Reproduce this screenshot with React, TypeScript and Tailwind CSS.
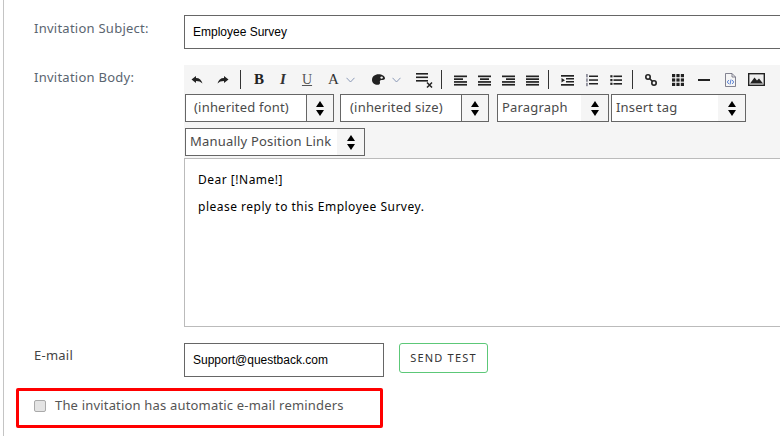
const ui = { fontFamily: '"Noto Sans", sans-serif' };
const serif = { fontFamily: '"Liberation Serif", serif' };

function Sep({ cls = '' }: { cls?: string }) {
  return <div className={`w-px h-[19px] bg-[#333] shrink-0 ${cls}`} />;
}

function Box({ w = 'w-6', children }: { w?: string; children: React.ReactNode }) {
  return <div className={`${w} h-[20px] flex items-center justify-center shrink-0`}>{children}</div>;
}

function I({ w = 16, children }: { w?: number; children: React.ReactNode }) {
  return (
    <svg width={w} height="14" viewBox={`0 0 ${w} 14`} className="shrink-0" fill="#222" stroke="none">
      {children}
    </svg>
  );
}

function Lines({ rows }: { rows: [number, number][] }) {
  return (
    <I w={13}>
      {rows.map(([x, w], i) => (
        <rect key={i} x={x} y={2.5 + i * 2.8} width={w} height="1.7" />
      ))}
    </I>
  );
}

function Chevron() {
  return (
    <svg width="9" height="6" viewBox="0 0 9 6" className="shrink-0" fill="none" stroke="#7f8fb0" strokeWidth="0.9">
      <path d="M0.5 0.8 L4.5 5 L8.5 0.8" />
    </svg>
  );
}

function Spinner({ cls }: { cls: string }) {
  return (
    <div className={`flex flex-col items-center justify-center gap-[3px] shrink-0 self-stretch bg-[#f5f5f5] ${cls}`}>
      <div className="w-0 h-0 border-x-[4.5px] border-x-transparent border-b-[6px] border-b-black" />
      <div className="w-0 h-0 border-x-[4.5px] border-x-transparent border-t-[6px] border-t-black" />
    </div>
  );
}

function Select({ label, w, text, arrow, divider }: { label: string; w: string; text: string; arrow: string; divider?: boolean }) {
  return (
    <div className={`flex items-stretch h-7 border border-[#666] bg-white shrink-0 ${w}`}>
      <div className={`flex-1 min-w-0 flex items-center text-[13px] tracking-[0.2px] text-[#4a4a4a] whitespace-nowrap ${text}`} style={ui}>
        {label}
      </div>
      <Spinner cls={`${arrow} ${divider ? 'border-l border-l-[#666]' : ''}`} />
    </div>
  );
}

export default function App() {
  return (
    <div className="w-[780px] h-[436px] overflow-hidden bg-white">
      <div className="ml-[3px] h-full border-l border-l-[#c4c4c4] pl-[30px] pt-[15px]">
        <div className="flex items-start h-[34px]">
          <div className="w-[150px] shrink-0 pt-[4px] text-[13px] leading-[18px] tracking-[0.25px] text-[#5a6570]" style={ui}>Invitation Subject:</div>
          <div className="w-[620px] shrink-0 h-[34px] border border-[#666] flex items-center pl-2 text-[12px] text-black" style={{ fontFamily: '"Liberation Sans", sans-serif' }}>Employee Survey</div>
        </div>

        <div className="flex items-start mt-[16px]">
          <div className="w-[150px] shrink-0 pt-[3px] text-[13px] leading-[18px] tracking-[0.25px] text-[#5a6570]" style={ui}>Invitation Body:</div>
          <div className="w-[620px] shrink-0">
            <div className="bg-[#f5f5f5] h-[94px] border-b border-b-[#bbb]">
              <div className="h-[29px] flex items-center">
                <Box w="w-[26px]"><I w={12}><path d="M0.5 6.5 L5 3 V5 C8.5 5 10.5 7 11.5 10.5 C9.8 8.8 7.8 8 5 8 V10 Z" /></I></Box>
                <Box w="w-[26px]"><I w={12}><path d="M11.5 6.5 L7 3 V5 C3.5 5 1.5 7 0.5 10.5 C2.2 8.8 4.2 8 7 8 V10 Z" /></I></Box>
                <Sep cls="ml-[4px]" />
                <div className="w-[6px] shrink-0" />
                <Box><span className="text-[15px] font-bold text-[#222] leading-none" style={serif}>B</span></Box>
                <Box><span className="text-[15px] font-bold italic text-[#333] leading-none" style={serif}>I</span></Box>
                <Box><span className="text-[14px] underline text-[#555] leading-none" style={serif}>U</span></Box>
                <div className="w-[44px] shrink-0 flex items-center pl-[9px] gap-[7px]">
                  <span className="text-[15px] text-[#333] leading-none" style={serif}>A</span>
                  <Chevron />
                </div>
                <div className="flex items-center gap-[7px] ml-[9px] shrink-0">
                  <svg width="13" height="11" viewBox="0 0 13 11" className="shrink-0">
                    <path d="M0 6 C0 2.5 3 0.3 6.5 0.3 C10 0.3 13 2 13 4.5 C13 6 11 6 9.5 6 C8 6 7.5 7 8 8.5 C8.3 10 7 10.8 5.5 10.8 C2.5 10.8 0 9 0 6 Z" fill="#222" />
                    <circle cx="9.6" cy="3.6" r="1.2" fill="#f5f5f5" />
                  </svg>
                  <Chevron />
                </div>
                <svg width="17" height="16" viewBox="0 0 17 16" className="shrink-0 ml-[15px]">
                  <rect x="0" y="1" width="12" height="1.6" fill="#222" />
                  <rect x="0" y="4.5" width="12" height="1.6" fill="#222" />
                  <rect x="0" y="8" width="12" height="1.6" fill="#222" />
                  <path d="M11 10.5 L16 15.5 M16 10.5 L11 15.5" stroke="#222" strokeWidth="1.5" />
                </svg>
                <Sep cls="ml-[8px]" />
                <div className="w-[6px] shrink-0" />
                <Box><Lines rows={[[0, 13], [0, 9], [0, 13], [0, 13]]} /></Box>
                <Box><Lines rows={[[0, 13], [2, 9], [0, 13], [0, 13]]} /></Box>
                <Box><Lines rows={[[0, 13], [4, 9], [0, 13], [0, 13]]} /></Box>
                <Box><Lines rows={[[0, 13], [0, 13], [0, 13], [0, 13]]} /></Box>
                <Sep cls="ml-[4px]" />
                <div className="w-[6px] shrink-0" />
                <Box w="w-[25px]">
                  <I w={13}>
                    <rect x="0" y="2" width="13" height="1.7" />
                    <rect x="5" y="5" width="8" height="1.5" />
                    <rect x="5" y="8" width="8" height="1.5" />
                    <rect x="0" y="11" width="13" height="1.7" />
                    <path d="M0.5 5 L4 7.3 L0.5 9.6 Z" />
                  </I>
                </Box>
                <Box>
                  <I w={12}>
                    <rect x="3" y="2.5" width="9" height="1.5" />
                    <rect x="3" y="6.3" width="9" height="1.5" />
                    <rect x="3" y="10" width="9" height="1.5" />
                    <rect x="0.3" y="1" width="1.3" height="3.4" fill="#667" />
                    <rect x="0.3" y="5.4" width="1.3" height="3.4" fill="#667" />
                    <rect x="0.3" y="9.8" width="1.3" height="3.4" fill="#667" />
                  </I>
                </Box>
                <Box>
                  <I w={12}>
                    <rect x="3.5" y="2.5" width="8.5" height="1.6" />
                    <rect x="3.5" y="6.3" width="8.5" height="1.6" />
                    <rect x="3.5" y="10" width="8.5" height="1.6" />
                    <rect x="0.3" y="2.2" width="2.2" height="2.2" />
                    <rect x="0.3" y="6" width="2.2" height="2.2" />
                    <rect x="0.3" y="9.7" width="2.2" height="2.2" />
                  </I>
                </Box>
                <Sep cls="ml-[4px]" />
                <div className="w-[5px] shrink-0" />
                <Box w="w-[26px]">
                  <svg width="12" height="12" viewBox="0 0 12 12" fill="none" stroke="#222" strokeWidth="1.6" className="shrink-0">
                    <circle cx="3" cy="3" r="2.2" />
                    <circle cx="9" cy="9" r="2.2" />
                    <path d="M4.5 4.5 L7.5 7.5" />
                  </svg>
                </Box>
                <Box w="w-[27px]">
                  <svg width="12" height="12" viewBox="0 0 12 12" fill="#222" className="shrink-0">
                    {[0, 4.4, 8.8].flatMap((y) => [0, 4.4, 8.8].map((x) => <rect key={`${x}-${y}`} x={x} y={y} width="3.2" height="3.2" />))}
                  </svg>
                </Box>
                <Box w="w-[26px]"><div className="w-[12px] h-[2px] bg-[#222]" /></Box>
                <Box w="w-[26px]">
                  <svg width="11" height="14" viewBox="0 0 11 14" fill="none" stroke="#667" strokeWidth="0.8" className="shrink-0">
                    <path d="M0.5 0.5 H7 L10.5 4 V13.5 H0.5 Z M7 0.5 V4 H10.5" />
                    <path d="M3.8 7 L2.3 9 L3.8 11 M7.2 7 L8.7 9 L7.2 11 M6 6.5 L5 11.5" stroke="#36c" />
                  </svg>
                </Box>
                <Box w="w-[26px]">
                  <svg width="17" height="13" viewBox="0 0 17 13" className="shrink-0">
                    <rect x="0.7" y="0.7" width="15.6" height="11.6" fill="#eee" stroke="#222" strokeWidth="1.4" />
                    <path d="M2 10.5 L6.5 4.5 L9 7.5 L11 5.5 L15 10.5 Z" fill="#222" />
                  </svg>
                </Box>
              </div>
              <div className="flex pl-px">
                <Select label="(inherited font)" w="w-[149px]" text="pl-[8px]" arrow="w-[27px]" divider />
                <Select label="(inherited size)" w="w-[149px] ml-[6px]" text="pl-[9px]" arrow="w-[27px]" divider />
                <Select label="Paragraph" w="w-[112px] ml-[8px]" text="pl-[4px]" arrow="w-[27px]" />
                <Select label="Insert tag" w="w-[135px] ml-[2px]" text="pl-[4px]" arrow="w-[27px]" />
              </div>
              <div className="mt-[6px] pl-px">
                <Select label="Manually Position Link" w="w-[180px]" text="pl-[4px]" arrow="w-[27px]" />
              </div>
            </div>
            <div className="h-[168px] border border-[#bbb] border-t-0 pl-[13px] pt-[12px] text-[12px] text-black tracking-[0.5px]" style={ui}>
              <div className="leading-[17px]">Dear [!Name!]</div>
              <div className="leading-[17px] mt-[10px]">please reply to this Employee Survey.</div>
            </div>
          </div>
        </div>

        <div className="flex items-start mt-[16px]">
          <div className="w-[150px] shrink-0 pt-[3px] text-[13px] leading-[18px] tracking-[0.25px] text-[#444]" style={ui}>E-mail</div>
          <div className="w-[200px] shrink-0 h-[34px] border border-[#666] flex items-center pl-2 text-[12px] text-black" style={{ fontFamily: '"Liberation Sans", sans-serif' }}>Support@questback.com</div>
          <button className="ml-[15px] w-[89px] h-[30px] border border-[#5cc878] rounded-[3px] text-[11px] tracking-[1.2px] text-[#333]" style={ui}>SEND TEST</button>
        </div>

        <div className="-ml-[18px] mt-[11px] w-[367px] h-[40px] border-[3px] border-[#ff0000] rounded-[2px] flex items-center pl-[15px] pb-[4px] gap-[9px]">
          <div className="w-3 h-3 border border-[#aaa] rounded-[2px] bg-[#e4e4e4] shrink-0" />
          <span className="text-[13px] tracking-[0.18px] text-[#555] whitespace-nowrap" style={ui}>The invitation has automatic e-mail reminders</span>
        </div>
      </div>
    </div>
  );
}
